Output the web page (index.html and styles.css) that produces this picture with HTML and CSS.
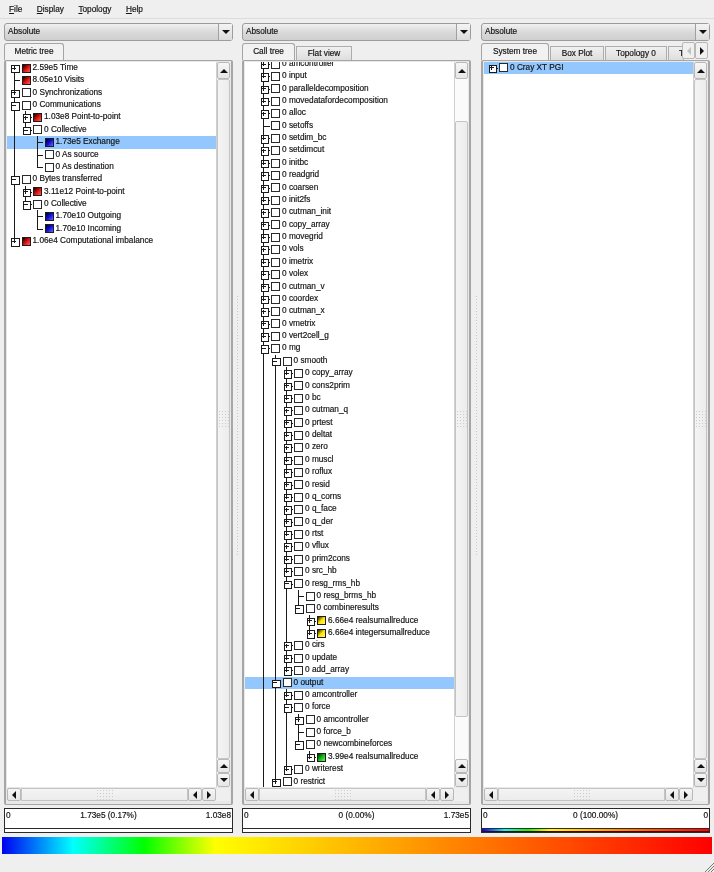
FILE: index.html
```html
<!DOCTYPE html>
<html lang="en">
<head>
<meta charset="utf-8">
<title>Cube</title>
<link rel="stylesheet" href="styles.css">
</head>
<body>
<div class="app">
<nav class="menubar">
  <span class="menu"><u>F</u>ile</span>
  <span class="menu"><u>D</u>isplay</span>
  <span class="menu"><u>T</u>opology</span>
  <span class="menu"><u>H</u>elp</span>
</nav>
<main class="panes">

<section class="pane">
  <div class="combo"><span class="combo-text">Absolute</span><span class="combo-btn"><i class="ar dn"></i></span></div>
  <div class="tabs"><span class="tab on w-metric">Metric tree</span></div>
  <div class="frame">
    <div class="list metric">
      <div class="r"><i class="t xf"></i><i class="c red"></i><span>2.59e5 Time</span></div>
      <div class="r"><i class="t n"></i><i class="c red"></i><span>8.05e10 Visits</span></div>
      <div class="r"><i class="t x"></i><i class="c"></i><span>0 Synchronizations</span></div>
      <div class="r"><i class="t m"></i><i class="c"></i><span>0 Communications</span></div>
      <div class="r"><i class="t g"></i><i class="t x"></i><i class="c red"></i><span>1.03e8 Point-to-point</span></div>
      <div class="r"><i class="t g"></i><i class="t me"></i><i class="c"></i><span>0 Collective</span></div>
      <div class="r sel"><i class="t g"></i><i class="t"></i><i class="t n"></i><i class="c blue"></i><span>1.73e5 Exchange</span></div>
      <div class="r"><i class="t g"></i><i class="t"></i><i class="t n"></i><i class="c"></i><span>0 As source</span></div>
      <div class="r"><i class="t g"></i><i class="t"></i><i class="t l"></i><i class="c"></i><span>0 As destination</span></div>
      <div class="r"><i class="t m"></i><i class="c"></i><span>0 Bytes transferred</span></div>
      <div class="r"><i class="t g"></i><i class="t x"></i><i class="c red"></i><span>3.11e12 Point-to-point</span></div>
      <div class="r"><i class="t g"></i><i class="t me"></i><i class="c"></i><span>0 Collective</span></div>
      <div class="r"><i class="t g"></i><i class="t"></i><i class="t n"></i><i class="c blue"></i><span>1.70e10 Outgoing</span></div>
      <div class="r"><i class="t g"></i><i class="t"></i><i class="t l"></i><i class="c blue"></i><span>1.70e10 Incoming</span></div>
      <div class="r"><i class="t xe"></i><i class="c red"></i><span>1.06e4 Computational imbalance</span></div>
    </div>
    <div class="vbar">
      <span class="sb"><i class="ar up"></i></span>
      <span class="thumb"><i class="dots-v"></i></span>
      <span class="sb"><i class="ar up"></i></span>
      <span class="sb"><i class="ar dn"></i></span>
    </div>
    <div class="hbar">
      <span class="sb"><i class="ar lf"></i></span>
      <span class="hthumb"><i class="dots-h"></i></span>
      <span class="sb"><i class="ar lf"></i></span>
      <span class="sb"><i class="ar rt"></i></span>
    </div>
  </div>
  <div class="value">
    <div class="labels wide"><span>0</span><span class="mid">1.73e5 (0.17%)</span><span class="end">1.03e8</span></div>
    <div class="strip"></div>
  </div>
</section>

<div class="split"><i class="grip"></i></div>

<section class="pane">
  <div class="combo"><span class="combo-text">Absolute</span><span class="combo-btn"><i class="ar dn"></i></span></div>
  <div class="tabs"><span class="tab on w-call">Call tree</span><span class="tab w-flat">Flat view</span></div>
  <div class="frame">
    <div class="list call">
      <div class="r"><i class="t"></i><i class="t x"></i><i class="c"></i><span>0 amcontroller</span></div>
      <div class="r"><i class="t"></i><i class="t x"></i><i class="c"></i><span>0 input</span></div>
      <div class="r"><i class="t"></i><i class="t x"></i><i class="c"></i><span>0 paralleldecomposition</span></div>
      <div class="r"><i class="t"></i><i class="t x"></i><i class="c"></i><span>0 movedatafordecomposition</span></div>
      <div class="r"><i class="t"></i><i class="t x"></i><i class="c"></i><span>0 alloc</span></div>
      <div class="r"><i class="t"></i><i class="t n"></i><i class="c"></i><span>0 setoffs</span></div>
      <div class="r"><i class="t"></i><i class="t x"></i><i class="c"></i><span>0 setdim_bc</span></div>
      <div class="r"><i class="t"></i><i class="t x"></i><i class="c"></i><span>0 setdimcut</span></div>
      <div class="r"><i class="t"></i><i class="t x"></i><i class="c"></i><span>0 initbc</span></div>
      <div class="r"><i class="t"></i><i class="t x"></i><i class="c"></i><span>0 readgrid</span></div>
      <div class="r"><i class="t"></i><i class="t x"></i><i class="c"></i><span>0 coarsen</span></div>
      <div class="r"><i class="t"></i><i class="t x"></i><i class="c"></i><span>0 init2fs</span></div>
      <div class="r"><i class="t"></i><i class="t x"></i><i class="c"></i><span>0 cutman_init</span></div>
      <div class="r"><i class="t"></i><i class="t x"></i><i class="c"></i><span>0 copy_array</span></div>
      <div class="r"><i class="t"></i><i class="t x"></i><i class="c"></i><span>0 movegrid</span></div>
      <div class="r"><i class="t"></i><i class="t x"></i><i class="c"></i><span>0 vols</span></div>
      <div class="r"><i class="t"></i><i class="t x"></i><i class="c"></i><span>0 imetrix</span></div>
      <div class="r"><i class="t"></i><i class="t x"></i><i class="c"></i><span>0 volex</span></div>
      <div class="r"><i class="t"></i><i class="t x"></i><i class="c"></i><span>0 cutman_v</span></div>
      <div class="r"><i class="t"></i><i class="t x"></i><i class="c"></i><span>0 coordex</span></div>
      <div class="r"><i class="t"></i><i class="t x"></i><i class="c"></i><span>0 cutman_x</span></div>
      <div class="r"><i class="t"></i><i class="t x"></i><i class="c"></i><span>0 vmetrix</span></div>
      <div class="r"><i class="t"></i><i class="t x"></i><i class="c"></i><span>0 vert2cell_g</span></div>
      <div class="r"><i class="t"></i><i class="t m"></i><i class="c"></i><span>0 mg</span></div>
      <div class="r"><i class="t"></i><i class="t g"></i><i class="t m"></i><i class="c"></i><span>0 smooth</span></div>
      <div class="r"><i class="t"></i><i class="t g"></i><i class="t g"></i><i class="t x"></i><i class="c"></i><span>0 copy_array</span></div>
      <div class="r"><i class="t"></i><i class="t g"></i><i class="t g"></i><i class="t x"></i><i class="c"></i><span>0 cons2prim</span></div>
      <div class="r"><i class="t"></i><i class="t g"></i><i class="t g"></i><i class="t x"></i><i class="c"></i><span>0 bc</span></div>
      <div class="r"><i class="t"></i><i class="t g"></i><i class="t g"></i><i class="t x"></i><i class="c"></i><span>0 cutman_q</span></div>
      <div class="r"><i class="t"></i><i class="t g"></i><i class="t g"></i><i class="t x"></i><i class="c"></i><span>0 prtest</span></div>
      <div class="r"><i class="t"></i><i class="t g"></i><i class="t g"></i><i class="t x"></i><i class="c"></i><span>0 deltat</span></div>
      <div class="r"><i class="t"></i><i class="t g"></i><i class="t g"></i><i class="t x"></i><i class="c"></i><span>0 zero</span></div>
      <div class="r"><i class="t"></i><i class="t g"></i><i class="t g"></i><i class="t x"></i><i class="c"></i><span>0 muscl</span></div>
      <div class="r"><i class="t"></i><i class="t g"></i><i class="t g"></i><i class="t x"></i><i class="c"></i><span>0 roflux</span></div>
      <div class="r"><i class="t"></i><i class="t g"></i><i class="t g"></i><i class="t x"></i><i class="c"></i><span>0 resid</span></div>
      <div class="r"><i class="t"></i><i class="t g"></i><i class="t g"></i><i class="t x"></i><i class="c"></i><span>0 q_corns</span></div>
      <div class="r"><i class="t"></i><i class="t g"></i><i class="t g"></i><i class="t x"></i><i class="c"></i><span>0 q_face</span></div>
      <div class="r"><i class="t"></i><i class="t g"></i><i class="t g"></i><i class="t x"></i><i class="c"></i><span>0 q_der</span></div>
      <div class="r"><i class="t"></i><i class="t g"></i><i class="t g"></i><i class="t x"></i><i class="c"></i><span>0 rtst</span></div>
      <div class="r"><i class="t"></i><i class="t g"></i><i class="t g"></i><i class="t x"></i><i class="c"></i><span>0 vflux</span></div>
      <div class="r"><i class="t"></i><i class="t g"></i><i class="t g"></i><i class="t x"></i><i class="c"></i><span>0 prim2cons</span></div>
      <div class="r"><i class="t"></i><i class="t g"></i><i class="t g"></i><i class="t x"></i><i class="c"></i><span>0 src_hb</span></div>
      <div class="r"><i class="t"></i><i class="t g"></i><i class="t g"></i><i class="t m"></i><i class="c"></i><span>0 resg_rms_hb</span></div>
      <div class="r"><i class="t"></i><i class="t g"></i><i class="t g"></i><i class="t g"></i><i class="t n"></i><i class="c"></i><span>0 resg_brms_hb</span></div>
      <div class="r"><i class="t"></i><i class="t g"></i><i class="t g"></i><i class="t g"></i><i class="t me"></i><i class="c"></i><span>0 combineresults</span></div>
      <div class="r"><i class="t"></i><i class="t g"></i><i class="t g"></i><i class="t g"></i><i class="t"></i><i class="t x"></i><i class="c yellow"></i><span>6.66e4 realsumallreduce</span></div>
      <div class="r"><i class="t"></i><i class="t g"></i><i class="t g"></i><i class="t g"></i><i class="t"></i><i class="t xe"></i><i class="c yellow"></i><span>6.66e4 integersumallreduce</span></div>
      <div class="r"><i class="t"></i><i class="t g"></i><i class="t g"></i><i class="t x"></i><i class="c"></i><span>0 cirs</span></div>
      <div class="r"><i class="t"></i><i class="t g"></i><i class="t g"></i><i class="t x"></i><i class="c"></i><span>0 update</span></div>
      <div class="r"><i class="t"></i><i class="t g"></i><i class="t g"></i><i class="t xe"></i><i class="c"></i><span>0 add_array</span></div>
      <div class="r sel"><i class="t"></i><i class="t g"></i><i class="t m"></i><i class="c"></i><span>0 output</span></div>
      <div class="r"><i class="t"></i><i class="t g"></i><i class="t g"></i><i class="t x"></i><i class="c"></i><span>0 amcontroller</span></div>
      <div class="r"><i class="t"></i><i class="t g"></i><i class="t g"></i><i class="t m"></i><i class="c"></i><span>0 force</span></div>
      <div class="r"><i class="t"></i><i class="t g"></i><i class="t g"></i><i class="t g"></i><i class="t x"></i><i class="c"></i><span>0 amcontroller</span></div>
      <div class="r"><i class="t"></i><i class="t g"></i><i class="t g"></i><i class="t g"></i><i class="t n"></i><i class="c"></i><span>0 force_b</span></div>
      <div class="r"><i class="t"></i><i class="t g"></i><i class="t g"></i><i class="t g"></i><i class="t me"></i><i class="c"></i><span>0 newcombineforces</span></div>
      <div class="r"><i class="t"></i><i class="t g"></i><i class="t g"></i><i class="t g"></i><i class="t"></i><i class="t xe"></i><i class="c green"></i><span>3.99e4 realsumallreduce</span></div>
      <div class="r"><i class="t"></i><i class="t g"></i><i class="t g"></i><i class="t xe"></i><i class="c"></i><span>0 writerest</span></div>
      <div class="r"><i class="t"></i><i class="t g"></i><i class="t x"></i><i class="c"></i><span>0 restrict</span></div>
    </div>
    <div class="vbar">
      <span class="sb"><i class="ar up"></i></span>
      <span class="gap"></span>
      <span class="thumb"><i class="dots-v"></i></span>
      <span class="gap"></span>
      <span class="sb"><i class="ar up"></i></span>
      <span class="sb"><i class="ar dn"></i></span>
    </div>
    <div class="hbar">
      <span class="sb"><i class="ar lf"></i></span>
      <span class="hthumb"><i class="dots-h"></i></span>
      <span class="sb"><i class="ar lf"></i></span>
      <span class="sb"><i class="ar rt"></i></span>
    </div>
  </div>
  <div class="value">
    <div class="labels"><span>0</span><span class="mid">0 (0.00%)</span><span class="end">1.73e5</span></div>
    <div class="strip"></div>
  </div>
</section>

<div class="split wide-split"><i class="grip"></i></div>

<section class="pane">
  <div class="combo"><span class="combo-text">Absolute</span><span class="combo-btn"><i class="ar dn"></i></span></div>
  <div class="tabs">
    <span class="tab on w-system">System tree</span><span class="tab w-box">Box Plot</span><span class="tab w-topo">Topology 0</span><span class="tab w-more">Topology 1</span>
    <span class="tabscroll"><span class="ts off"><i class="ar lf"></i></span><span class="ts"><i class="ar rt"></i></span></span>
  </div>
  <div class="frame">
    <div class="list system">
      <div class="r sel"><i class="t xo"></i><i class="c"></i><span>0 Cray XT PGI</span></div>
    </div>
    <div class="vbar">
      <span class="sb"><i class="ar up"></i></span>
      <span class="thumb"><i class="dots-v"></i></span>
      <span class="sb"><i class="ar up"></i></span>
      <span class="sb"><i class="ar dn"></i></span>
    </div>
    <div class="hbar">
      <span class="sb"><i class="ar lf"></i></span>
      <span class="hthumb"><i class="dots-h"></i></span>
      <span class="sb"><i class="ar lf"></i></span>
      <span class="sb"><i class="ar rt"></i></span>
    </div>
  </div>
  <div class="value">
    <div class="labels"><span>0</span><span class="mid">0 (100.00%)</span><span class="end">0</span></div>
    <div class="strip rainbow"></div>
  </div>
</section>

</main>
<div class="colorbar"></div>
<div class="statusbar"><svg class="sizegrip" width="9" height="9" viewBox="0 0 9 9"><path d="M0 9L9 0M3 9L9 3M6 9L9 6" stroke="#777" stroke-width="1" fill="none"/></svg></div>
</div>
</body>
</html>
```
FILE: styles.css
```css
* { box-sizing: border-box; }
html, body { margin: 0; padding: 0; height: 100%; background: #efefef; }
.app {
  width: 714px; height: 872px; display: flex; flex-direction: column;
  font: 8.25px/12.38px "Liberation Sans", Arial, sans-serif; color: #141414;
  -webkit-text-stroke: 0.18px #141414;
  background: #efefef; overflow: hidden; filter: blur(0.3px);
}
.menubar {
  height: 19px; flex: none; display: flex; padding: 3px 0 0 9px; gap: 14.5px;
  border-bottom: 1px solid #dcdcdc;
}
.menu { line-height: 13px; }
.panes { flex: none; display: flex; padding: 4px 0 0 4px; height: 814px; }
.pane { width: 229px; flex: none; display: flex; flex-direction: column; }
.split { width: 9px; flex: none; display: flex; justify-content: center; padding-top: 272px; }
.wide-split { width: 10px; }
.grip {
  width: 3px; height: 260px;
  background: radial-gradient(circle, #c8c8c8 0.8px, transparent 1px) 0 0 / 3px 3px;
}

.combo {
  height: 18px; flex: none; display: flex; border: 1px solid #9c9c9c; border-radius: 3px;
  background: linear-gradient(#f2f2f2, #d8d8d8 55%, #cfcfcf);
}
.combo-text { flex: 1; padding-left: 3px; line-height: 16px; }
.combo-btn {
  width: 14px; display: flex; align-items: center; justify-content: center;
  border-left: 1px solid #a0a0a0; background: linear-gradient(#f4f4f4, #dcdcdc);
}

.tabs { height: 19px; flex: none; display: flex; align-items: flex-end; padding-top: 2px; position: relative; overflow: hidden; }
.tab {
  height: 14px; flex: none; text-align: center; line-height: 13px; white-space: nowrap; overflow: hidden;
  background: linear-gradient(#f0f0f0, #dedede); border: 1px solid #adadad; border-bottom: 0; margin-left: 1px;
}
.tab.on {
  height: 17px; margin-left: 0; line-height: 15px; background: #f2f2f2;
  border-radius: 3px 3px 0 0; border-color: #a4a4a4;
}
.w-metric { width: 60px; }
.w-call { width: 53px; }
.w-flat { width: 56px; }
.w-system { width: 68px; }
.w-box { width: 54px; }
.w-topo { width: 62px; }
.w-more { width: 16px; text-align: left; padding-left: 10px; }
.tabscroll { position: absolute; right: 2px; top: 1px; display: flex; gap: 0; }
.ts {
  width: 13px; height: 17px; display: flex; align-items: center; justify-content: center;
  background: #f0f0f0; border: 1px solid #b8b8b8; border-radius: 2px;
}
.ts.off .ar { opacity: .2; }

.frame {
  flex: none; height: 745px; display: grid; grid-template-columns: 209px 14px; grid-template-rows: 1fr 14px;
  padding: 1px 2px 3px 1px; border: 2px solid #a6a6a6; border-top-width: 1px; border-bottom-width: 1px;
  border-radius: 2px; column-gap: 0; background: #e8e8e8;
}
.list { background: #fff; overflow: hidden; min-height: 0; }
.r { height: 12.38px; display: flex; align-items: center; white-space: nowrap; padding-left: 1.5px; }
.r span { margin-left: 2px; }
.metric .r:first-child { margin-top: -0.1px; }
.call .r { padding-left: 1.5px; }
.call .r:first-child { margin-top: -4.2px; }
.system .r { padding-left: 2px; }
.system .r:first-child { margin-top: -0.5px; }
.sel { background: #93c7fd; }

.t {
  --v: #1a1a1a; width: 11.5px; height: 100%; flex: none; position: relative; display: block;
  background-repeat: no-repeat;
}
.g { background-image: linear-gradient(var(--v), var(--v)); background-size: 1.3px 100%; background-position: 5.2px 0; }
.n, .x, .m {
  background-image: linear-gradient(var(--v), var(--v)), linear-gradient(var(--v), var(--v));
  background-size: 1.3px 100%, 6px 1px; background-position: 5.2px 0, 5.5px 6px;
}
.l, .xe, .me {
  background-image: linear-gradient(var(--v), var(--v)), linear-gradient(var(--v), var(--v));
  background-size: 1.3px 6px, 6px 1px; background-position: 5.2px 0, 5.5px 6px;
}
.xf {
  background-image: linear-gradient(var(--v), var(--v)), linear-gradient(var(--v), var(--v));
  background-size: 1.3px 6px, 6px 1px; background-position: 5.2px 6px, 5.5px 6px;
}
.xo { background-image: linear-gradient(var(--v), var(--v)); background-size: 6px 1px; background-position: 5.5px 6px; }
.x::before, .m::before, .xe::before, .me::before, .xf::before, .xo::before {
  content: ""; position: absolute; left: 2.5px; top: 3px; width: 6.5px; height: 6.5px;
  background: #fff; border: 1.3px solid #1a1a1a;
}
.x::after, .xe::after, .xf::after, .xo::after {
  content: ""; position: absolute; left: 3.75px; top: 4.25px; width: 4px; height: 4px;
  background:
    linear-gradient(#1a1a1a, #1a1a1a) 50% 50% / 4px 1px no-repeat,
    linear-gradient(#1a1a1a, #1a1a1a) 50% 50% / 1px 4px no-repeat;
}
.m::after, .me::after {
  content: ""; position: absolute; left: 3.75px; top: 5.75px; width: 4px; height: 1px; background: #1a1a1a;
}
.c {
  width: 9px; height: 9px; flex: none; display: block; margin-left: 1.5px;
  background: #fff; border: 1px solid #2a2a2a;
}
.red { background: linear-gradient(135deg, #3a0000 10%, #d81010 50%, #ff6060); border-color: #1c1c1c; }
.blue { background: linear-gradient(135deg, #000040 10%, #1010d8 50%, #6a6aff); border-color: #1c1c1c; }
.yellow { background: linear-gradient(135deg, #3a3000 5%, #ffe400 50%, #fff480); border-color: #1c1c1c; }
.green { background: linear-gradient(135deg, #003a00 5%, #10b810 50%, #70f070); border-color: #1c1c1c; }

.vbar { display: flex; flex-direction: column; background: #fbfbfb; border-left: 1px solid #d0d0d0; min-height: 0; }
.sb {
  display: flex; align-items: center; justify-content: center; flex: none;
  background: linear-gradient(#f6f6f6, #e6e6e6); border: 1px solid #b8b8b8; border-radius: 2px;
}
.vbar .sb { height: 14px; }
.vbar .sb:first-child { height: 17px; }
.gap { height: 42px; flex: none; }
.thumb {
  flex: 1; min-height: 0; display: flex; align-items: center; justify-content: center;
  background: linear-gradient(90deg, #f4f4f4, #ececec); border: 1px solid #c4c4c4; border-radius: 2px;
}
.dots-v {
  width: 12px; height: 18px;
  background: radial-gradient(circle, #cccccc 0.8px, transparent 1px) 0 0 / 3px 3px;
}
.hbar { grid-column: 1 / 3; display: flex; background: #efefef; margin-top: 1px; padding-right: 14px; min-width: 0; }
.hbar .sb { width: 14px; }
.hthumb {
  flex: 1; display: flex; align-items: center; justify-content: center;
  background: linear-gradient(#f4f4f4, #ececec); border: 1px solid #c4c4c4;
}
.dots-h {
  width: 18px; height: 12px;
  background: radial-gradient(circle, #cccccc 0.8px, transparent 1px) 0 0 / 3px 3px;
}

.ar { display: block; width: 0; height: 0; border-style: solid; border-color: transparent; }
.up { border-width: 0 4px 4px; border-bottom-color: #111; }
.dn { border-width: 4px 4px 0; border-top-color: #111; }
.lf { border-width: 4px 4px 4px 0; border-right-color: #111; }
.rt { border-width: 4px 0 4px 4px; border-left-color: #111; }

.value { margin-top: 3px; height: 25px; flex: none; display: flex; flex-direction: column; border: 1px solid #2a2a2a; background: #fff; }
.labels { height: 20px; display: grid; grid-template-columns: 1fr auto 1fr; padding: 1px 1px 0; line-height: 12px; border-bottom: 1px solid #2a2a2a; }
.labels .end { text-align: right; }
.wide .mid { margin-right: 20px; }
.strip { flex: 1; }
.rainbow { background: linear-gradient(90deg, #00f, #0ff 10%, #0f0 20%, #ff0 30%, #f00 100%); border-bottom: 1px solid #500; }

.colorbar {
  height: 17px; flex: none; margin: 4px 2px 0;
  background: linear-gradient(90deg, #0000f0, #0ff 10%, #0f0 20%, #ff0 30%, #f00 100%);
}
.statusbar { flex: 1; display: flex; justify-content: flex-end; align-items: flex-end; }
.sizegrip { display: block; }
```
